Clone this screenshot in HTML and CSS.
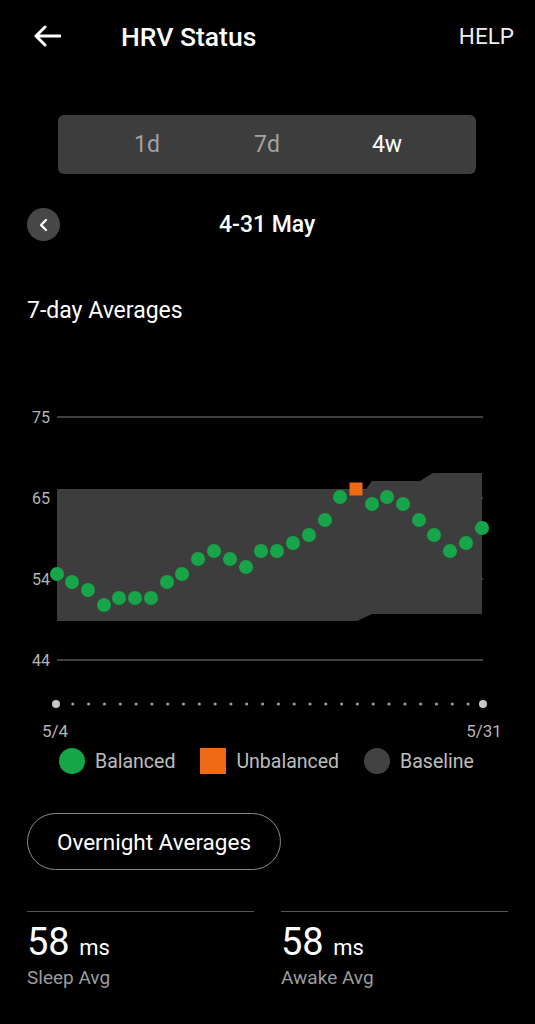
FILE: index.html
```html
<!DOCTYPE html>
<html lang="en">
    <head>
        <title>HRV Status</title>
        <link rel="stylesheet" href="styles.css">
    </head>
    <body>
        <header class="topbar">
            <svg class="back" width="28" height="22" viewBox="0 0 28 22">
                <path d="M27 11H3M12 2L3 11l9 9" fill="none" stroke="#fff" stroke-width="3" stroke-linecap="round" stroke-linejoin="round"/>
            </svg>
            <h1 class="title">HRV Status</h1>
            <span class="help">HELP</span>
        </header>

        <div class="tabs">
            <span class="tab">1d</span>
            <span class="tab">7d</span>
            <span class="tab active">4w</span>
        </div>

        <div class="daterow">
            <span class="prev">
                <svg width="12" height="14" viewBox="0 0 12 14">
                    <path d="M8 2L3 7l5 5" fill="none" stroke="#fff" stroke-width="2.4" stroke-linecap="round" stroke-linejoin="round"/>
                </svg>
            </span>
            <span class="range">4-31 May</span>
        </div>

        <h2 class="section">7-day Averages</h2>

        <svg class="chart" width="535" height="345" viewBox="0 400 535 345">
            <!-- grid -->
            <g stroke="#565656" stroke-width="1.5">
                <line x1="57" y1="417" x2="483" y2="417"/>
                <line x1="57" y1="498" x2="483" y2="498"/>
                <line x1="57" y1="579" x2="483" y2="579"/>
                <line x1="57" y1="660" x2="483" y2="660"/>
            </g>
            <g class="ylab" text-anchor="end">
                <text x="50" y="423">75</text>
                <text x="50" y="504">65</text>
                <text x="50" y="585">54</text>
                <text x="50" y="666">44</text>
            </g>

            <!-- baseline band -->
            <path d="M57 489H366L372 481H420L433 473H482V614H372L357 621H57Z" fill="#3d3d3d"/>

            <!-- balanced days -->
            <g fill="#17a54a">
                <circle cx="57" cy="574" r="7"/>
                <circle cx="72" cy="582" r="7"/>
                <circle cx="88" cy="590" r="7"/>
                <circle cx="104" cy="605" r="7"/>
                <circle cx="119" cy="598" r="7"/>
                <circle cx="135" cy="598" r="7"/>
                <circle cx="151" cy="598" r="7"/>
                <circle cx="167" cy="582" r="7"/>
                <circle cx="182" cy="574" r="7"/>
                <circle cx="198" cy="559" r="7"/>
                <circle cx="214" cy="551" r="7"/>
                <circle cx="230" cy="559" r="7"/>
                <circle cx="246" cy="567" r="7"/>
                <circle cx="261" cy="551" r="7"/>
                <circle cx="277" cy="551" r="7"/>
                <circle cx="293" cy="543" r="7"/>
                <circle cx="309" cy="535" r="7"/>
                <circle cx="325" cy="520" r="7"/>
                <circle cx="340" cy="497" r="7"/>
                <circle cx="372" cy="504" r="7"/>
                <circle cx="387" cy="497" r="7"/>
                <circle cx="403" cy="504" r="7"/>
                <circle cx="419" cy="520" r="7"/>
                <circle cx="434" cy="535" r="7"/>
                <circle cx="450" cy="551" r="7"/>
                <circle cx="466" cy="543" r="7"/>
                <circle cx="482" cy="528" r="7"/>
            </g>
            <!-- unbalanced day -->
            <rect x="349.5" y="482.5" width="13" height="13" fill="#ef6a16"/>

            <!-- x axis -->
            <g fill="#9a9a9a">
                <circle cx="72.8" cy="704" r="1.6"/>
                <circle cx="88.6" cy="704" r="1.6"/>
                <circle cx="104.4" cy="704" r="1.6"/>
                <circle cx="120.3" cy="704" r="1.6"/>
                <circle cx="136.1" cy="704" r="1.6"/>
                <circle cx="151.9" cy="704" r="1.6"/>
                <circle cx="167.7" cy="704" r="1.6"/>
                <circle cx="183.5" cy="704" r="1.6"/>
                <circle cx="199.3" cy="704" r="1.6"/>
                <circle cx="215.1" cy="704" r="1.6"/>
                <circle cx="230.9" cy="704" r="1.6"/>
                <circle cx="246.7" cy="704" r="1.6"/>
                <circle cx="262.6" cy="704" r="1.6"/>
                <circle cx="278.4" cy="704" r="1.6"/>
                <circle cx="294.2" cy="704" r="1.6"/>
                <circle cx="310" cy="704" r="1.6"/>
                <circle cx="325.8" cy="704" r="1.6"/>
                <circle cx="341.6" cy="704" r="1.6"/>
                <circle cx="357.4" cy="704" r="1.6"/>
                <circle cx="373.2" cy="704" r="1.6"/>
                <circle cx="389" cy="704" r="1.6"/>
                <circle cx="404.9" cy="704" r="1.6"/>
                <circle cx="420.7" cy="704" r="1.6"/>
                <circle cx="436.5" cy="704" r="1.6"/>
                <circle cx="452.3" cy="704" r="1.6"/>
                <circle cx="468.1" cy="704" r="1.6"/>
            </g>
            <circle cx="56" cy="704" r="4" fill="#c8c8c8"/>
            <circle cx="483" cy="704" r="4" fill="#c8c8c8"/>
            <g class="xlab" text-anchor="middle">
                <text x="55" y="737">5/4</text>
                <text x="484" y="737">5/31</text>
            </g>
        </svg>

        <div class="legend">
            <span class="key"><i class="swatch dot green"></i>Balanced</span>
            <span class="key"><i class="swatch orange"></i>Unbalanced</span>
            <span class="key"><i class="swatch dot grey"></i>Baseline</span>
        </div>

        <button class="pill">Overnight Averages</button>

        <div class="stats">
            <div class="stat">
                <div class="value">58 <span class="unit">ms</span></div>
                <div class="label">Sleep Avg</div>
            </div>
            <div class="stat">
                <div class="value">58 <span class="unit">ms</span></div>
                <div class="label">Awake Avg</div>
            </div>
        </div>
    </body>
</html>
```

FILE: styles.css
```css
* {
    box-sizing: border-box;
}

body {
    margin: 0;
    background-color: #000;
    color: #fff;
    font-family: Roboto, "Liberation Sans", sans-serif;
}

/* header */
.topbar {
    height: 72px;
    display: flex;
    align-items: center;
    padding: 0 21px 0 33px;
}

.back {
    display: block;
}

.title {
    margin: 0 0 0 60px;
    font-size: 26.5px;
    font-weight: 500;
    flex: 1;
}

.help {
    font-size: 22.5px;
    color: #eee;
}

/* period tabs */
.tabs {
    margin: 43px 0 0 58px;
    width: 418px;
    height: 59px;
    border-radius: 6px;
    background-color: #3d3d3d;
    display: grid;
    grid-template-columns: repeat(3, 120px);
    justify-content: center;
    align-items: center;
    text-align: center;
    font-size: 23px;
    color: #a3a3a3;
}

.tab.active {
    color: #fff;
}

/* date row */
.daterow {
    margin-top: 34px;
    height: 33px;
    padding-left: 27px;
    display: flex;
    align-items: center;
}

.prev {
    width: 33px;
    height: 33px;
    border-radius: 50%;
    background-color: #474747;
    display: flex;
    align-items: center;
    justify-content: center;
}

.prev svg {
    display: block;
}

.range {
    margin-left: 159px;
    font-size: 23px;
    font-weight: 500;
}

.section {
    margin: 57px 0 0 27px;
    font-size: 23px;
    font-weight: 400;
    line-height: 26px;
}

/* chart */
.chart {
    display: block;
    margin-top: 76px;
}

.ylab {
    font-size: 16px;
    fill: #b4b4b4;
}

.xlab {
    font-size: 17px;
    fill: #b4b4b4;
}

/* legend */
.legend {
    margin-top: 3px;
    padding-left: 59px;
    display: flex;
    gap: 25px;
    font-size: 19.5px;
    color: #bdbdbd;
}

.key {
    display: flex;
    align-items: center;
    gap: 10px;
    height: 26px;
}

.swatch {
    width: 26px;
    height: 26px;
}

.swatch.dot {
    border-radius: 50%;
}

.green {
    background-color: #17a54a;
}

.orange {
    background-color: #ef6a16;
}

.grey {
    background-color: #424242;
}

/* overnight button */
.pill {
    margin: 39px 0 0 27px;
    width: 254px;
    height: 57px;
    border: 1px solid #8a8a8a;
    border-radius: 29px;
    background: none;
    color: #fff;
    font-family: inherit;
    font-size: 22.5px;
}

/* stats */
.stats {
    margin-top: 41px;
    padding: 0 27px;
    display: grid;
    grid-template-columns: 1fr 1fr;
    gap: 27px;
}

.stat {
    border-top: 1.5px solid #555;
    padding-top: 9px;
}

.value {
    font-size: 38px;
    line-height: 42px;
}

.unit {
    font-size: 22px;
    line-height: 1;
}

.label {
    font-size: 19px;
    line-height: 22px;
    color: #9c9c9c;
    margin-top: 4px;
}
```
